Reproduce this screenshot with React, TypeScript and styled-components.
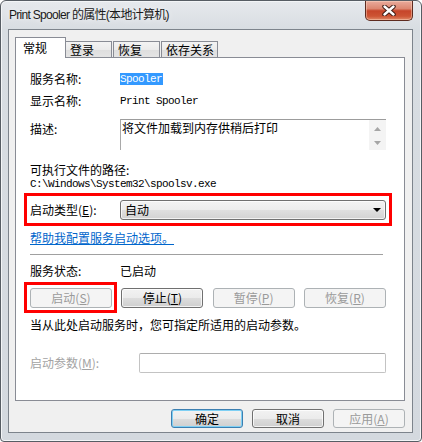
import React from "react";
import styled, { createGlobalStyle, css } from "styled-components";

const GlobalStyle = createGlobalStyle`
  html, body { margin: 0; padding: 0; background: #ffffff; }
  body {
    font-family: "Noto Sans CJK SC", "Noto Sans", sans-serif;
    font-size: 12px;
    color: #000;
  }
  * { box-sizing: border-box; }
`;

const Window = styled.div`
  width: 422px;
  height: 442px;
  border: 1px solid #575d64;
  border-radius: 6px 6px 4px 4px;
  background: linear-gradient(180deg, #e6e9ed 0px, #d8dde2 28px, #d4d9df 100%);
  box-shadow: inset 0 0 0 1px #f3f5f7;
  display: flex;
  flex-direction: column;
  overflow: hidden;
`;

const TitleBar = styled.div`
  height: 28px;
  flex: none;
  display: flex;
  align-items: center;
  padding-left: 8px;
`;

const Title = styled.div`
  font-family: "Liberation Sans", "Noto Sans CJK SC", sans-serif;
  font-size: 12px;
  letter-spacing: -0.7px;
  line-height: 14px;
  color: #1a1a1a;
  text-shadow: 0 0 6px rgba(255, 255, 255, 0.9);
`;

const CloseButton = styled.div`
  align-self: flex-start;
  margin: 0 8px 0 auto;
  width: 48px;
  height: 20px;
  border: 1px solid #5e2b20;
  border-top: none;
  border-radius: 0 0 5px 5px;
  background: linear-gradient(
    180deg,
    #e9ab9c 0%,
    #dc8771 40%,
    #c6452a 52%,
    #cd5434 80%,
    #e08a68 100%
  );
  box-shadow: inset 0 0 0 1px rgba(255, 220, 200, 0.45);
  display: flex;
  align-items: center;
  justify-content: center;
`;

const Client = styled.div`
  flex: 1;
  margin: 0 8px 8px 7px;
  border: 1px solid #7d848c;
  background: #f0f0f0;
  padding: 7px 7px 0 6px;
  display: flex;
  flex-direction: column;
`;

const TabStrip = styled.div`
  height: 20px;
  display: flex;
  align-items: flex-end;
  position: relative;
  z-index: 1;
`;

const Tab = styled.div<{ $active?: boolean; $w: number; $ml: number }>`
  width: ${(p) => p.$w}px;
  margin-left: ${(p) => p.$ml}px;
  border: 1px solid #898c95;
  border-bottom: none;
  display: flex;
  align-items: center;
  line-height: 14px;
  font-size: 12px;
  ${(p) =>
    p.$active
      ? css`
          height: 21px;
          margin-bottom: -1px;
          background: #ffffff;
          padding-left: 7px;
          padding-bottom: 1px;
        `
      : css`
          height: 16px;
          background: linear-gradient(180deg, #f3f3f3 0%, #ebebeb 50%, #dedede 51%, #e4e4e4 100%);
          padding-left: 4px;
          padding-top: 1px;
        `}
`;

const Panel = styled.div`
  height: 344px;
  flex: none;
  background: #ffffff;
  border: 1px solid #898c95;
  padding: 10px 18px 0 14px;
  display: flex;
  flex-direction: column;
`;

const Row = styled.div<{ $h: number; $mt?: number; $top?: boolean }>`
  display: flex;
  align-items: ${(p) => (p.$top ? "flex-start" : "center")};
  height: ${(p) => p.$h}px;
  margin-top: ${(p) => p.$mt ?? 0}px;
  line-height: 14px;
`;

const Label = styled.div<{ $w?: number; $pt?: number; $dim?: boolean }>`
  width: ${(p) => p.$w ?? 90}px;
  flex: none;
  padding-top: ${(p) => p.$pt ?? 0}px;
  color: ${(p) => (p.$dim ? "#a3a3a3" : "#000")};
`;

const Mono = styled.span<{ $selected?: boolean }>`
  font-family: "Liberation Mono", "DejaVu Sans Mono", monospace;
  font-size: 11px;
  letter-spacing: -0.6px;
  line-height: 12px;
  display: inline-block;
  ${(p) =>
    p.$selected &&
    css`
      background: #3399ff;
      color: #ffffff;
      padding-right: 0.6px;
    `}
`;

const DescBox = styled.div`
  width: 266px;
  height: 31px;
  display: flex;
  border-top: 1px solid #9c9c9c;
  border-left: 1px solid #a9a9a9;
  background: #ffffff;
`;

const DescText = styled.div`
  flex: 1;
  padding-left: 1px;
  line-height: 14px;
  padding-top: 1px;
`;

const ScrollBar = styled.div`
  width: 17px;
  flex: none;
  background: #f4f4f4;
  display: flex;
  flex-direction: column;
  align-items: center;
  padding-top: 7px;
  gap: 10px;
`;

const TextLine = styled.div<{ $mt?: number; $color?: string }>`
  line-height: 14px;
  height: 14px;
  margin-top: ${(p) => p.$mt ?? 0}px;
  color: ${(p) => p.$color ?? "#000"};
  display: flex;
  align-items: center;
`;

const Highlight = styled.div<{ $mt?: number }>`
  position: relative;
  margin-top: ${(p) => p.$mt ?? 0}px;
`;

const RedFrame = styled.div<{ $t: number; $r: number; $b: number; $l: number }>`
  position: absolute;
  top: ${(p) => -p.$t}px;
  right: ${(p) => -p.$r}px;
  bottom: ${(p) => -p.$b}px;
  left: ${(p) => -p.$l}px;
  border: 3px solid #ff0000;
  pointer-events: none;
`;

const ComboBox = styled.div`
  width: 266px;
  height: 20px;
  border: 1px solid #707070;
  border-radius: 3px;
  background: linear-gradient(180deg, #f3f3f3 0%, #ececec 50%, #dfdfdf 51%, #d2d2d2 100%);
  box-shadow: inset 0 0 0 1px rgba(255, 255, 255, 0.7);
  display: flex;
  align-items: center;
  justify-content: space-between;
  padding: 0 4px 0 4px;
  line-height: 14px;
`;

const HelpLink = styled.a`
  color: #0066cc;
  text-decoration: underline;
  text-underline-offset: 1px;
  cursor: pointer;
`;

const Separator = styled.div`
  margin-top: 9px;
  height: 1px;
  width: 353px;
  background: #a0a0a0;
`;

const ButtonRow = styled.div`
  margin-top: 10px;
  height: 20px;
  display: flex;
  justify-content: space-between;
`;

const BtnWrap = styled.div`
  position: relative;
  display: flex;
`;

const PushButton = styled.button<{ $w: number; $h: number; $disabled?: boolean; $default?: boolean }>`
  width: ${(p) => p.$w}px;
  height: ${(p) => p.$h}px;
  padding: 0;
  margin: 0;
  font-family: "Noto Sans CJK SC", "Noto Sans", sans-serif;
  font-size: 12px;
  line-height: 14px;
  border-radius: 3px;
  display: flex;
  align-items: center;
  justify-content: center;
  ${(p) =>
    p.$disabled
      ? css`
          border: 1px solid #adb2b5;
          background: #f4f4f4;
          color: #9a9a9a;
        `
      : css`
          border: 1px solid ${p.$default ? "#3c7fb1" : "#707070"};
          background: linear-gradient(180deg, #f2f2f2 0%, #ebebeb 50%, #dddddd 51%, #cfcfcf 100%);
          color: #000;
          box-shadow: inset 0 0 0 1px ${p.$default ? "#7fd0f4" : "rgba(255,255,255,0.75)"};
        `}
`;

const Key = styled.span`
  text-decoration: underline;
`;

const ParamInput = styled.div`
  width: 247px;
  height: 20px;
  border: 1px solid #c3c3c3;
  border-top-color: #adadad;
  border-radius: 2px;
  background: #ffffff;
`;

const DialogButtons = styled.div`
  margin-top: 8px;
  display: flex;
  justify-content: flex-end;
  gap: 9px;
`;

const CloseIcon = () => (
  <svg width="14" height="11" viewBox="0 0 14 11">
    <path d="M2.5 1.5 L11.5 9.5 M11.5 1.5 L2.5 9.5" stroke="#3b1912" strokeWidth="4.4" strokeLinecap="round" />
    <path d="M2.5 1.5 L11.5 9.5 M11.5 1.5 L2.5 9.5" stroke="#ffffff" strokeWidth="2.4" strokeLinecap="round" />
  </svg>
);

const UpArrow = () => (
  <svg width="7" height="4" viewBox="0 0 7 4">
    <path d="M0 4 L3.5 0 L7 4 Z" fill="#a6a6a6" />
  </svg>
);

const DownArrow = ({ color = "#a6a6a6", w = 7, h = 4 }: { color?: string; w?: number; h?: number }) => (
  <svg width={w} height={h} viewBox={`0 0 ${w} ${h}`}>
    <path d={`M0 0 L${w} 0 L${w / 2} ${h} Z`} fill={color} />
  </svg>
);

export default function App() {
  return (
    <>
      <GlobalStyle />
      <Window>
        <TitleBar>
          <Title>Print Spooler 的属性(本地计算机)</Title>
          <CloseButton>
            <CloseIcon />
          </CloseButton>
        </TitleBar>
        <Client>
          <TabStrip>
            <Tab $active $w={51} $ml={0}>常规</Tab>
            <Tab $w={47} $ml={-1}>登录</Tab>
            <Tab $w={47} $ml={1}>恢复</Tab>
            <Tab $w={57} $ml={1}>依存关系</Tab>
          </TabStrip>
          <Panel>
            <Row $h={22}>
              <Label>服务名称:</Label>
              <Mono $selected>Spooler</Mono>
            </Row>
            <Row $h={22}>
              <Label>显示名称:</Label>
              <Mono>Print Spooler</Mono>
            </Row>
            <Row $h={31} $mt={7} $top>
              <Label $pt={3}>描述:</Label>
              <DescBox>
                <DescText>将文件加载到内存供稍后打印</DescText>
                <ScrollBar>
                  <UpArrow />
                  <DownArrow />
                </ScrollBar>
              </DescBox>
            </Row>
            <TextLine $mt={13}>可执行文件的路径:</TextLine>
            <TextLine>
              <Mono>C:\Windows\System32\spoolsv.exe</Mono>
            </TextLine>
            <Highlight $mt={9}>
              <Row $h={20}>
                <Label>
                  启动类型(<Key>E</Key>):
                </Label>
                <ComboBox>
                  <span>自动</span>
                  <DownArrow color="#000" w={8} h={4} />
                </ComboBox>
              </Row>
              <RedFrame $t={7} $r={6} $b={6} $l={6} />
            </Highlight>
            <TextLine $mt={11}>
              <HelpLink>帮助我配置服务启动选项。</HelpLink>
            </TextLine>
            <Separator />
            <Row $h={14} $mt={9}>
              <Label>服务状态:</Label>
              <span>已启动</span>
            </Row>
            <ButtonRow>
              <BtnWrap>
                <PushButton $w={82} $h={20} $disabled>
                  启动(<Key>S</Key>)
                </PushButton>
                <RedFrame $t={6} $r={5} $b={5} $l={6} />
              </BtnWrap>
              <PushButton $w={82} $h={20}>
                停止(<Key>T</Key>)
              </PushButton>
              <PushButton $w={82} $h={20} $disabled>
                暂停(<Key>P</Key>)
              </PushButton>
              <PushButton $w={82} $h={20} $disabled>
                恢复(<Key>R</Key>)
              </PushButton>
            </ButtonRow>
            <TextLine $mt={10}>当从此处启动服务时，您可指定所适用的启动参数。</TextLine>
            <Row $h={20} $mt={21}>
              <Label $w={109} $dim>
                启动参数(<Key>M</Key>):
              </Label>
              <ParamInput />
            </Row>
          </Panel>
          <DialogButtons>
            <PushButton $w={72} $h={19} $default>
              确定
            </PushButton>
            <PushButton $w={72} $h={19}>
              取消
            </PushButton>
            <PushButton $w={72} $h={19} $disabled>
              应用(<Key>A</Key>)
            </PushButton>
          </DialogButtons>
        </Client>
      </Window>
    </>
  );
}
